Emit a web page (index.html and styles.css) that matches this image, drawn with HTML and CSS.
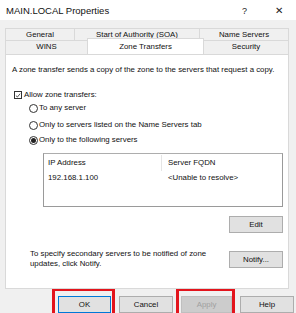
FILE: index.html
```html
<!DOCTYPE html>
<html>
<head>
<meta charset="utf-8">
<link rel="stylesheet" href="styles.css">
</head>
<body>
<div class="dialog">
  <div class="titlebar">
    <span class="title">MAIN.LOCAL Properties</span>
    <span class="ctrl help-q">?</span>
    <span class="ctrl close-x">✕</span>
  </div>
  <div class="tabs">
    <div class="tabrow row1">
      <div class="tab w-general">General</div>
      <div class="tab w-soa">Start of Authority (SOA)</div>
      <div class="tab w-ns">Name Servers</div>
    </div>
    <div class="tabrow row2">
      <div class="tab w-wins">WINS</div>
      <div class="tab sel w-zt">Zone Transfers</div>
      <div class="tab w-sec">Security</div>
    </div>
  </div>
  <div class="panel">
    <div class="desc">A zone transfer sends a copy of the zone to the servers that request a copy.</div>
    <div class="opt chk-row"><span class="chk"><svg width="7" height="7" viewBox="0 0 7 7"><path d="M1 3.6 L2.8 5.3 L6 1.4" fill="none" stroke="#222" stroke-width="0.9"/></svg></span>Allow zone transfers:</div>
    <div class="opt rad-row r1"><span class="rad"></span>To any server</div>
    <div class="opt rad-row r2"><span class="rad"></span>Only to servers listed on the Name Servers tab</div>
    <div class="opt rad-row r3"><span class="rad on"></span>Only to the following servers</div>
    <div class="list">
      <div class="lhead">
        <div class="col c1">IP Address</div>
        <div class="col c2">Server FQDN</div>
      </div>
      <div class="lrow">
        <div class="col c1">192.168.1.100</div>
        <div class="col c2">&lt;Unable to resolve&gt;</div>
      </div>
    </div>
    <div class="editrow"><div class="btn">Edit</div></div>
    <div class="notifyrow">
      <div class="ntext">To specify secondary servers to be notified of zone<br>updates, click Notify.</div>
      <div class="btn">Notify...</div>
    </div>
  </div>
  <div class="buttons">
    <div class="btn def">OK</div>
    <div class="btn">Cancel</div>
    <div class="btn dis">Apply</div>
    <div class="btn">Help</div>
  </div>
  <div class="mark mark-ok"></div>
  <div class="mark mark-apply"></div>
</div>
</body>
</html>
```
FILE: styles.css
```css
* { box-sizing: border-box; }
html, body { margin: 0; padding: 0; }
body {
  width: 296px; height: 313px; overflow: hidden;
  background: #f0f0f0;
  font-family: "Liberation Sans", Arial, sans-serif;
  font-size: 7.85px; color: #111;
}
.dialog { position: relative; width: 296px; height: 313px; }
.titlebar {
  height: 20px; background: #fff;
  display: flex; align-items: center;
  padding-left: 6px; padding-top: 1px;
}
.title { font-size: 9.5px; flex: 1; }
.ctrl { font-size: 9px; color: #222; }
.help-q { margin-right: 28px; }
.close-x { margin-right: 13px; font-size: 10px; }
.tabs { margin-top: 8px; padding-left: 5px; }
.tabrow { display: flex; }
.row1 { height: 12px; }
.row2 { height: 14px; }
.tab {
  background: #f0f0f0;
  border: 1px solid #d9d9d9; border-bottom: none;
  text-align: center; line-height: 11px;
  margin-right: -1px;
}
.row2 .tab { line-height: 12px; }
.tab.sel { background: #fff; position: relative; height: 16px; margin-top: -2px; z-index: 2; border-color: #d9d9d9; line-height: 15px; }
.w-general { width: 70px; }
.w-soa { width: 126px; }
.w-ns { width: 90px; }
.w-wins { width: 83px; }
.w-zt { width: 117px; }
.w-sec { width: 86px; }
.panel {
  margin-left: 5px; width: 284px; height: 235px;
  background: #fff; border: 1px solid #d9d9d9;
  position: relative; z-index: 1;
  padding-top: 9px;
}
.desc { height: 12px; line-height: 12px; padding-left: 6px; white-space: nowrap; }
.opt { height: 12px; line-height: 12px; display: flex; align-items: center; white-space: nowrap; }
.chk-row { margin-top: 13px; padding-left: 8px; }
.chk {
  width: 8px; height: 8px; border: 1px solid #333; margin-right: 2px;
  display: flex; align-items: center; justify-content: center; background: #fff;
}
.chk svg { display: block; }
.rad-row { padding-left: 23px; }
.r1 { margin-top: 1px; }
.r2 { margin-top: 5px; }
.r3 { margin-top: 3px; }
.rad {
  width: 9px; height: 9px; border: 1px solid #333; border-radius: 50%;
  margin-right: 1px; display: flex; align-items: center; justify-content: center;
}
.rad.on::after { content: ""; width: 5px; height: 5px; border-radius: 50%; background: #222; }
.list {
  margin-top: 7px; margin-left: 37px; width: 240px; height: 54px;
  border: 1px solid #9a9a9a; border-top-color: #adadad;
}
.lhead, .lrow { display: flex; }
.lhead { height: 16px; margin-top: 1px; }
.lrow { height: 14px; }
.col { line-height: 15px; white-space: nowrap; }
.lrow .col { line-height: 14px; }
.c1 { width: 118px; padding-left: 4px; }
.c2 { padding-left: 6px; }
.lhead .c1 { border-right: 1px solid #e5e5e5; }
.btn {
  width: 54px; height: 17px; line-height: 15px; text-align: center;
  background: #e1e1e1; border: 1px solid #adadad;
}
.editrow { margin-top: 9px; display: flex; justify-content: flex-end; padding-right: 5px; }
.notifyrow { margin-top: 16px; display: flex; justify-content: space-between; align-items: center; padding-right: 5px; padding-left: 24px; }
.ntext { line-height: 10px; }
.buttons { display: flex; gap: 8px; padding-left: 58px; margin-top: 7px; }
.btn.def { border-color: #0078d7; width: 53px; }
.btn.dis { background: #cccccc; border-color: #bfbfbf; color: #a0a0a0; width: 51px; }
.buttons .btn { height: 17px; }
.mark { position: absolute; border: 3px solid #e3141c; }
.mark-ok { left: 52px; top: 288px; width: 63px; height: 30px; }
.mark-apply { left: 176px; top: 288px; width: 59px; height: 30px; }
```
